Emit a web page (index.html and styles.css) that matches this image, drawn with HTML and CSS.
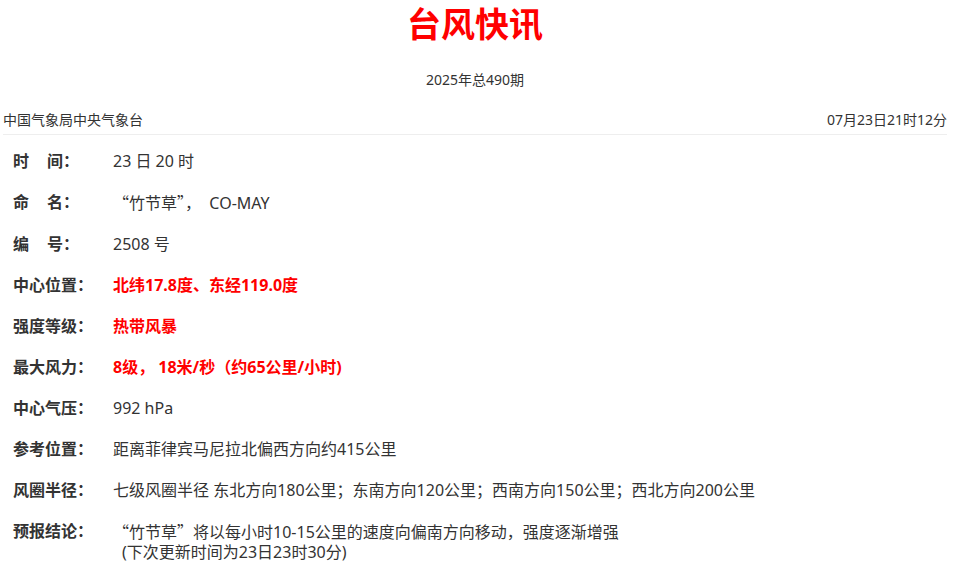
FILE: index.html
```html
<!DOCTYPE html>
<html lang="zh-CN">
<head>
<meta charset="utf-8">
<title>台风快讯</title>
<link rel="stylesheet" href="styles.css">
</head>
<body>
<div class="page">
  <h1 class="title">台风快讯</h1>
  <div class="issue">2025年总490期</div>
  <div class="meta">
    <span>中国气象局中央气象台</span>
    <span>07月23日21时12分</span>
  </div>
  <div class="list">
    <div class="row"><div class="label">时<span class="sp"></span>间：</div><div class="value">23 日 20 时</div></div>
    <div class="row"><div class="label">命<span class="sp"></span>名：</div><div class="value"><span class="cjk">“</span>竹节草<span class="cjk">”，</span>&nbsp; CO-MAY</div></div>
    <div class="row"><div class="label">编<span class="sp"></span>号：</div><div class="value">2508 号</div></div>
    <div class="row"><div class="label">中心位置：</div><div class="value red">北纬17.8度、东经119.0度</div></div>
    <div class="row"><div class="label">强度等级：</div><div class="value red">热带风暴</div></div>
    <div class="row"><div class="label">最大风力：</div><div class="value red">8级， 18米/秒（约65公里/小时)</div></div>
    <div class="row"><div class="label">中心气压：</div><div class="value">992 hPa</div></div>
    <div class="row"><div class="label">参考位置：</div><div class="value">距离菲律宾马尼拉北偏西方向约415公里</div></div>
    <div class="row"><div class="label">风圈半径：</div><div class="value">七级风圈半径 东北方向180公里；东南方向120公里；西南方向150公里；西北方向200公里</div></div>
    <div class="row"><div class="label">预报结论：</div><div class="value"><div><span class="cjk">“</span>竹节草<span class="cjk">”</span>将以每小时10-15公里的速度向偏南方向移动，强度逐渐增强</div><div class="indent">(下次更新时间为23日23时30分)</div></div></div>
  </div>
</div>
</body>
</html>
```

FILE: styles.css
```css
* { box-sizing: border-box; }
body {
  margin: 0;
  background: #fff;
  color: #333;
  font-family: "Noto Sans", "Noto Sans CJK SC", sans-serif;
}
.page {
  width: 944px;
  margin-left: 3px;
  padding-top: 2px;
}
.title {
  margin: 0;
  font-size: 34px;
  line-height: 42px;
  padding: 0;
  font-weight: bold;
  color: #ff0000;
  text-align: center;
  font-family: "Noto Sans CJK SC", sans-serif;
}
.issue {
  margin-top: 26px;
  font-size: 14px;
  line-height: 20px;
  text-align: center;
}
.meta {
  display: flex;
  justify-content: space-between;
  margin-top: 18px;
  font-size: 14px;
  line-height: 24px;
  padding-bottom: 2px;
  border-bottom: 1px solid #eee;
}
.list {
  padding-top: 5px;
}
.row {
  display: flex;
  padding: 11px 0 10px 10px;
  font-size: 16px;
  line-height: 20px;
}
.label {
  width: 100px;
  flex: none;
  font-weight: bold;
}
.sp {
  display: inline-block;
  width: 18px;
}
.value {
  flex: 1;
}
.indent {
  padding-left: 9px;
}
.red {
  color: #ff0000;
  font-weight: bold;
}
.cjk {
  font-family: "Noto Sans CJK SC", sans-serif;
}
```
